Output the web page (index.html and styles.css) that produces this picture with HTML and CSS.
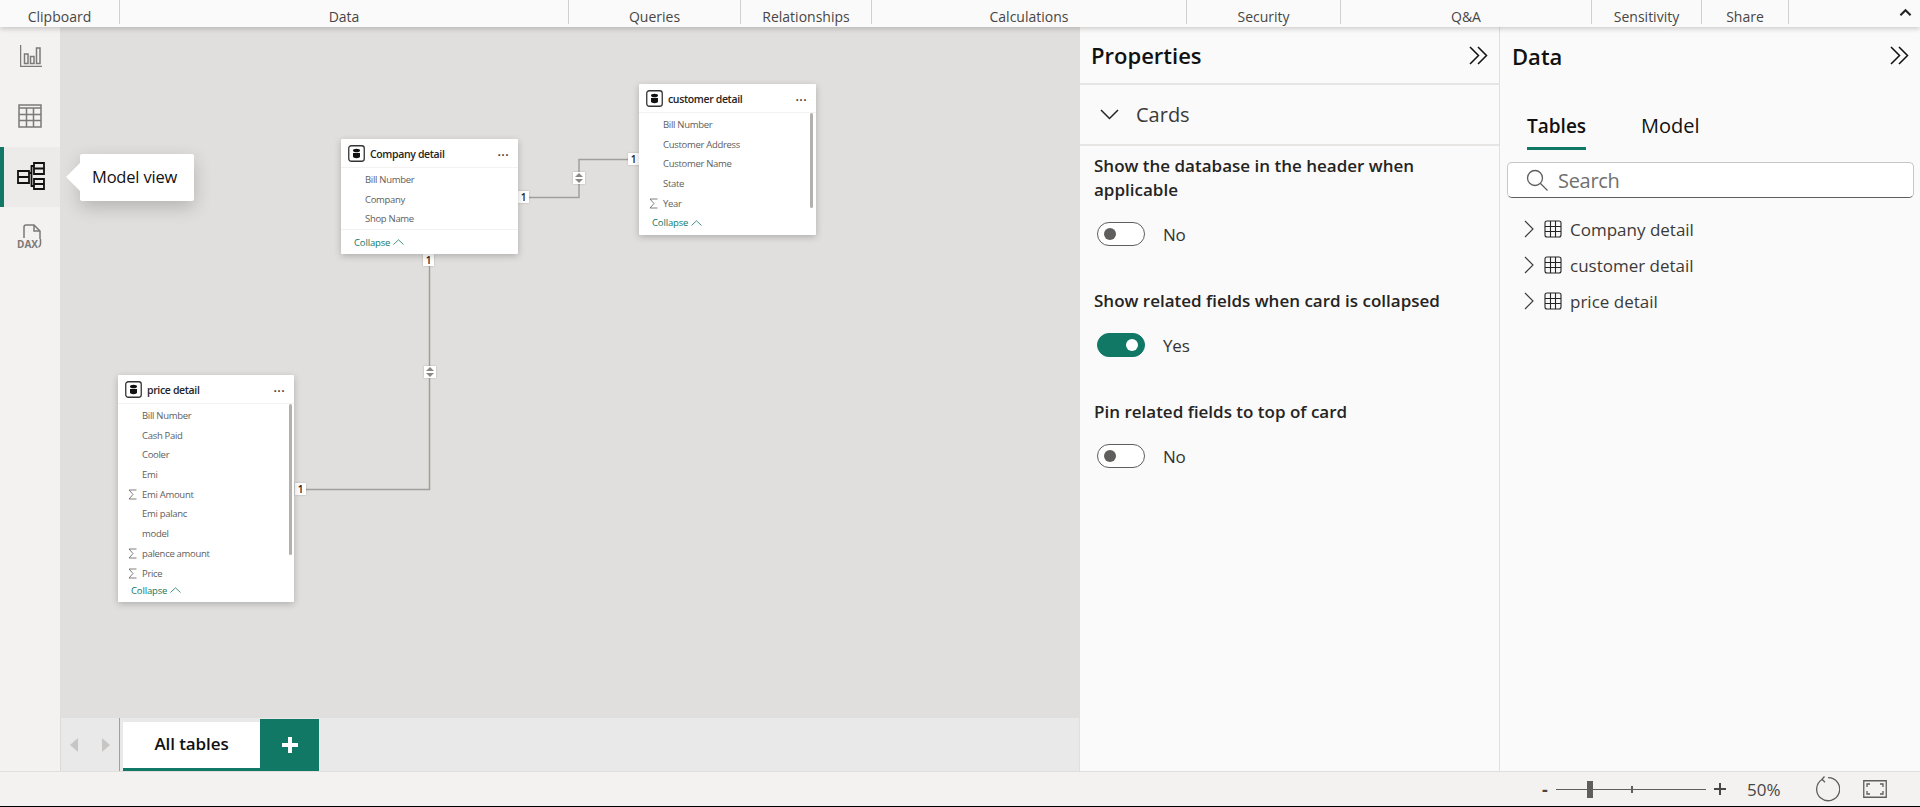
FILE: index.html
```html
<!doctype html>
<html lang="en">
<head>
  <meta charset="utf-8">
  <title>Model view</title>
  <link rel="stylesheet" href="styles.css">
</head>
<body>

  <!-- ribbon group labels -->
  <div class="ribbon">
    <div class="group">Clipboard</div>
    <div class="group">Data</div>
    <div class="group">Queries</div>
    <div class="group">Relationships</div>
    <div class="group">Calculations</div>
    <div class="group">Security</div>
    <div class="group">Q&amp;A</div>
    <div class="group">Sensitivity</div>
    <div class="group">Share</div>
    <svg class="ribbon-caret" viewBox="0 0 14 9"><path d="M1.5 7.5 7 2l5.5 5.5"/></svg>
  </div>

  <div class="main">
    <!-- left rail -->
    <nav class="rail">
      <div class="rail-item">
        <svg class="rail-icon nudge" width="22" height="22" viewBox="0 0 22 22"><path d="M.5 0v21.500H22M4.500 9h3.500v9.500H4.500zM10.500 11.500h3.500v7h-3.500zM16.500 3h3.500v15.500h-3.500z"/></svg>
      </div>
      <div class="rail-item">
        <svg class="rail-icon up" width="24" height="24" viewBox="0 0 24 24"><path d="M1 1h22v22H1zM1 4h22M1 10.500h22M1 16.500h22M8.500 4v19M15.500 4v19"/></svg>
      </div>
      <div class="rail-item active">
        <svg class="rail-icon dark" width="28" height="28" viewBox="0 0 28 28"><path d="M1 9h11v12H1zM1 15h11M17 1h10v11H17zM17 6.500h10M17 17h10v10H17zM17 22h10M12 11h2.500V4H17M14.500 11v13H17"/></svg>
        <div class="tooltip">Model view</div>
      </div>
      <div class="rail-item">
        <svg class="rail-icon" width="27" height="25" viewBox="0 0 27 25"><path d="M7 14V3q0-2 2-2h8l6 6v8M17 1v6h6M23.500 15v5q0 2-2 3"/><text class="dax" x="0" y="23.500">DAX</text></svg>
      </div>
    </nav>

    <div class="center">
      <div class="canvas">
        <!-- relationship lines -->
        <svg class="links" width="1019" height="691">
          <path d="M469 170.500H519V132.500H569"/>
          <path d="M369.500 238V462.500H246"/>
        </svg>

        <div class="tag tag-a">1</div>
        <div class="tag tag-b">1</div>
        <div class="tag tag-c">1</div>
        <div class="tag tag-d">1</div>
        <div class="dir dir-a"><svg width="8" height="10" viewBox="0 0 8 10"><path d="M4 0 8 4H0zM4 10 0 6h8z"/></svg></div>
        <div class="dir dir-b"><svg width="8" height="10" viewBox="0 0 8 10"><path d="M4 0 8 4H0zM4 10 0 6h8z"/></svg></div>

        <section class="card card-company">
          <header class="card-head">
            <svg class="db" width="17" height="17" viewBox="0 0 17 17"><rect x=".75" y=".75" width="15.500" height="15.500" rx="2.500"/><ellipse cx="8.500" cy="5.500" rx="3.500" ry="1.800"/><path d="M5 8h7v3.500c0 2.300-7 2.300-7 0z"/></svg>
            <span class="card-title">Company detail</span>
            <span class="dots">&middot;&middot;&middot;</span>
          </header>
          <div class="fields">
            <div class="field">Bill Number</div>
            <div class="field">Company</div>
            <div class="field">Shop Name</div>
          </div>
          <footer class="card-foot">Collapse <svg width="11" height="6" viewBox="0 0 11 6"><path d="M.5 5.500 5.500.800l5 4.700"/></svg></footer>
        </section>

        <section class="card card-customer">
          <header class="card-head">
            <svg class="db" width="17" height="17" viewBox="0 0 17 17"><rect x=".75" y=".75" width="15.500" height="15.500" rx="2.500"/><ellipse cx="8.500" cy="5.500" rx="3.500" ry="1.800"/><path d="M5 8h7v3.500c0 2.300-7 2.300-7 0z"/></svg>
            <span class="card-title">customer detail</span>
            <span class="dots">&middot;&middot;&middot;</span>
          </header>
          <div class="fields">
            <div class="field">Bill Number</div>
            <div class="field">Customer Address</div>
            <div class="field">Customer Name</div>
            <div class="field">State</div>
            <div class="field"><svg class="sum" width="9" height="11" viewBox="0 0 9 11"><path d="M8.500 1H1l4 4.500L1 10h7.500"/></svg>Year</div>
            <div class="scroll"></div>
          </div>
          <footer class="card-foot flat">Collapse <svg width="11" height="6" viewBox="0 0 11 6"><path d="M.5 5.500 5.500.800l5 4.700"/></svg></footer>
        </section>

        <section class="card card-price">
          <header class="card-head">
            <svg class="db" width="17" height="17" viewBox="0 0 17 17"><rect x=".75" y=".75" width="15.500" height="15.500" rx="2.500"/><ellipse cx="8.500" cy="5.500" rx="3.500" ry="1.800"/><path d="M5 8h7v3.500c0 2.300-7 2.300-7 0z"/></svg>
            <span class="card-title">price detail</span>
            <span class="dots">&middot;&middot;&middot;</span>
          </header>
          <div class="fields">
            <div class="field">Bill Number</div>
            <div class="field">Cash Paid</div>
            <div class="field">Cooler</div>
            <div class="field">Emi</div>
            <div class="field"><svg class="sum" width="9" height="11" viewBox="0 0 9 11"><path d="M8.500 1H1l4 4.500L1 10h7.500"/></svg>Emi Amount</div>
            <div class="field">Emi palanc</div>
            <div class="field">model</div>
            <div class="field"><svg class="sum" width="9" height="11" viewBox="0 0 9 11"><path d="M8.500 1H1l4 4.500L1 10h7.500"/></svg>palence amount</div>
            <div class="field"><svg class="sum" width="9" height="11" viewBox="0 0 9 11"><path d="M8.500 1H1l4 4.500L1 10h7.500"/></svg>Price</div>
            <div class="scroll"></div>
          </div>
          <footer class="card-foot flat">Collapse <svg width="11" height="6" viewBox="0 0 11 6"><path d="M.5 5.500 5.500.800l5 4.700"/></svg></footer>
        </section>
      </div>

      <!-- layout tabs -->
      <div class="tabbar">
        <div class="tab-nav">
          <svg width="8" height="14" viewBox="0 0 8 14"><path d="M8 0v14L0 7z"/></svg>
          <svg width="8" height="14" viewBox="0 0 8 14"><path d="M0 0v14l8-7z"/></svg>
        </div>
        <div class="tab">All tables</div>
        <div class="tab-add"><svg width="18" height="18" viewBox="0 0 18 18"><path d="M9 1v16M1 9h16"/></svg></div>
      </div>
    </div>

    <aside class="panel">
      <div class="panel-head">
        <h2 class="panel-title">Properties</h2>
        <svg class="collapse" width="19" height="19" viewBox="0 0 19 19"><path d="M1 1l8.500 8.500L1 18M9 1l8.500 8.500L9 18"/></svg>
      </div>
      <div class="cards-row">
        <svg width="19" height="11" viewBox="0 0 19 11"><path d="M1 1l8.500 8.500L18 1"/></svg>
        <span>Cards</span>
      </div>
      <div class="settings">
        <div class="setting">
          <div class="setting-title">Show the database in the header when applicable</div>
          <div class="switch-row"><span class="switch"></span>No</div>
        </div>
        <div class="setting">
          <div class="setting-title">Show related fields when card is collapsed</div>
          <div class="switch-row"><span class="switch on"></span>Yes</div>
        </div>
        <div class="setting">
          <div class="setting-title">Pin related fields to top of card</div>
          <div class="switch-row"><span class="switch"></span>No</div>
        </div>
      </div>
    </aside>

    <aside class="panel data-panel">
      <div class="panel-head plain">
        <h2 class="panel-title">Data</h2>
        <svg class="collapse" width="19" height="19" viewBox="0 0 19 19"><path d="M1 1l8.500 8.500L1 18M9 1l8.500 8.500L9 18"/></svg>
      </div>
      <div class="data-tabs">
        <div class="data-tab active">Tables</div>
        <div class="data-tab">Model</div>
      </div>
      <div class="search">
        <svg width="22" height="22" viewBox="0 0 22 22"><circle cx="9" cy="9" r="7.500"/><path d="m14.500 14.500 7 7"/></svg>
        <span>Search</span>
      </div>
      <div class="tree">
        <div class="tree-row">
          <svg class="tree-arrow" width="10" height="18" viewBox="0 0 10 18"><path d="m1 1 8 8-8 8"/></svg>
          <svg class="tree-table" width="18" height="18" viewBox="0 0 18 18"><path d="M3 1h12q2 0 2 2v12q0 2-2 2H3q-2 0-2-2V3q0-2 2-2zM1 6.500h16M1 11.500h16M6.500 1v16M11.500 1v16"/></svg>
          Company detail
        </div>
        <div class="tree-row">
          <svg class="tree-arrow" width="10" height="18" viewBox="0 0 10 18"><path d="m1 1 8 8-8 8"/></svg>
          <svg class="tree-table" width="18" height="18" viewBox="0 0 18 18"><path d="M3 1h12q2 0 2 2v12q0 2-2 2H3q-2 0-2-2V3q0-2 2-2zM1 6.500h16M1 11.500h16M6.500 1v16M11.500 1v16"/></svg>
          customer detail
        </div>
        <div class="tree-row">
          <svg class="tree-arrow" width="10" height="18" viewBox="0 0 10 18"><path d="m1 1 8 8-8 8"/></svg>
          <svg class="tree-table" width="18" height="18" viewBox="0 0 18 18"><path d="M3 1h12q2 0 2 2v12q0 2-2 2H3q-2 0-2-2V3q0-2 2-2zM1 6.500h16M1 11.500h16M6.500 1v16M11.500 1v16"/></svg>
          price detail
        </div>
      </div>
    </aside>
  </div>

  <!-- status bar with zoom controls -->
  <div class="status">
    <span class="zoom-sign">-</span>
    <div class="slider"><span class="thumb"></span><span class="tick"></span></div>
    <svg class="plus" width="12" height="12" viewBox="0 0 12 12"><path d="M6 0v12M0 6h12"/></svg>
    <span class="percent">50%</span>
    <svg class="reset" width="26" height="26" viewBox="0 0 26 26"><path d="M8.500 3.200A11.500 11.500 0 1 0 14 1.700M10.500 .5 8 3.300l3 3"/></svg>
    <svg class="fit" width="24" height="18" viewBox="0 0 24 18"><path d="M.75.75h22.500v16.500H.75zM4 7V4h3M17 4h3v3M4 11v3h3M17 14h3v-3"/></svg>
  </div>

</body>
</html>
```

FILE: styles.css
```css
html, body {
  height: 100%;
}

body {
  margin: 0;
  height: 807px;
  overflow: hidden;
  display: flex;
  flex-direction: column;
  font-family: 'Open Sans', 'Liberation Sans', sans-serif;
  background-color: #fafafa;
  color: #252423;
}

svg {
  display: block;
  fill: none;
  stroke: currentColor;
}

/* ribbon */
.ribbon {
  height: 27px;
  flex: none;
  display: grid;
  grid-template-columns: 120px 449px 172px 131px 315px 154px 251px 110px 87px;
  position: relative;
  z-index: 2;
  background-color: #fafafa;
  box-shadow: 0 2px 5px rgba(0, 0, 0, .18);
  color: #484644;
  font-size: 14px;
}

.group {
  height: 24px;
  padding-top: 7px;
  box-sizing: border-box;
  line-height: 20px;
  text-align: center;
  border-right: 1px solid #d2d0ce;
}

.ribbon-caret {
  position: absolute;
  right: 8px;
  top: 8px;
  width: 13px;
  height: 9px;
  stroke: #252423;
  stroke-width: 2.2;
}

.main {
  flex: 1;
  display: flex;
  min-height: 0;
}

/* left rail */
.rail {
  width: 60px;
  flex: none;
  background-color: #f3f2f1;
}

.rail-item {
  height: 60px;
  display: flex;
  align-items: center;
  justify-content: center;
  position: relative;
}

.rail-item.active {
  background-color: #edebe9;
  box-shadow: inset 4px 0 0 #117865;
}

.rail-icon {
  stroke: #7c7a78;
  stroke-width: 1.5;
  margin-top: -2px;
}

.rail-icon.nudge {
  margin-left: 1px;
}

.rail-icon.up {
  margin-top: -3px;
}

.rail-icon.dark {
  stroke: #111;
  stroke-width: 1.800;
  margin-left: 2px;
}

.dax {
  fill: #7c7a78;
  stroke: none;
  font-size: 10px;
  font-weight: 700;
  font-family: 'Open Sans', sans-serif;
}

.tooltip {
  position: absolute;
  left: 80px;
  top: 7px;
  width: 114px;
  height: 47px;
  z-index: 3;
  box-sizing: border-box;
  padding-left: 12px;
  background-color: #fff;
  border-radius: 2px;
  box-shadow: 0 6px 18px rgba(0, 0, 0, .2);
  color: #111;
  font-size: 16.500px;
  letter-spacing: -.2px;
  line-height: 46px;
  white-space: nowrap;
}

.tooltip::before {
  content: "";
  position: absolute;
  left: -14px;
  top: 9px;
  border: 14px solid transparent;
  border-left: 0;
  border-right-color: #fff;
}

/* canvas */
.center {
  flex: 1;
  display: flex;
  flex-direction: column;
  min-width: 0;
}

.canvas {
  flex: 1;
  position: relative;
  background-color: #e0dfdd;
}

.links {
  position: absolute;
  left: 0;
  top: 0;
  stroke: #a19f9d;
  stroke-width: 1.500;
}

.tag {
  position: absolute;
  width: 11px;
  height: 12px;
  background-color: #fff;
  color: #252423;
  font-size: 10px;
  font-weight: 600;
  line-height: 12px;
  text-align: center;
  box-shadow: 0 0 2px rgba(0, 0, 0, .2);
}

.tag-a { left: 458px; top: 164px; }
.tag-b { left: 568px; top: 126px; }
.tag-c { left: 363px; top: 227px; }
.tag-d { left: 235px; top: 456px; }

.dir {
  position: absolute;
  width: 12px;
  height: 12px;
  display: flex;
  align-items: center;
  justify-content: center;
  background-color: #fff;
  box-shadow: 0 0 2px rgba(0, 0, 0, .2);
}

.dir svg {
  fill: #8a8886;
  stroke: none;
}

.dir-a { left: 513px; top: 145px; }
.dir-b { left: 364px; top: 339px; }

.card {
  position: absolute;
  display: flex;
  flex-direction: column;
  background-color: #fff;
  box-shadow: 0 2px 7px rgba(0, 0, 0, .22);
  border-radius: 1px;
}

.card-company { left: 281px; top: 112px; width: 177px; height: 115px; }
.card-customer { left: 579px; top: 57px; width: 177px; height: 151px; }
.card-price { left: 58px; top: 348px; width: 176px; height: 227px; }

.card-head {
  height: 29px;
  flex: none;
  display: flex;
  align-items: center;
  padding: 1px 9px 0 7px;
  border-bottom: 1px solid #f3f2f1;
  box-sizing: border-box;
}

.db {
  flex: none;
  margin-right: 5px;
  margin-top: -1px;
}

.db rect {
  stroke: #333;
  stroke-width: 1.300;
}

.db ellipse, .db > path {
  fill: #111;
  stroke: none;
}

.card-title {
  flex: 1;
  font-size: 10.500px;
  font-weight: 600;
  letter-spacing: -.35px;
  color: #252423;
}

.dots {
  font-size: 15px;
  font-weight: 400;
  line-height: 12px;
  color: #333;
}

.fields {
  flex: 1;
  position: relative;
  padding-top: 2px;
  overflow: hidden;
}

.field {
  height: 19.700px;
  padding-left: 24px;
  position: relative;
  font-size: 9.500px;
  letter-spacing: -.3px;
  line-height: 19.700px;
  color: #605e5c;
}

.sum {
  position: absolute;
  left: 10px;
  top: 4px;
  stroke: #605e5c;
  stroke-width: .8;
}

.scroll {
  position: absolute;
  right: 3px;
  top: 0;
  width: 3.500px;
  height: 95px;
  background-color: #b3b0ad;
  border-radius: 2px;
}

.card-price .scroll {
  right: 2px;
  height: 151px;
}

.card-foot {
  height: 25px;
  flex: none;
  display: flex;
  align-items: center;
  gap: 3px;
  padding-left: 13px;
  border-top: 1px solid #f3f2f1;
  box-sizing: border-box;
  color: #117865;
  font-size: 9.500px;
  letter-spacing: -.15px;
}

.card-foot.flat {
  border-top: 0;
}

/* the price card has more rows than room, the footer gives way */
.card-price .card-foot {
  height: 18px;
  padding-bottom: 6px;
}

.card-foot svg {
  stroke: #117865;
  stroke-width: .8;
}

/* layout tabs */
.tabbar {
  height: 53px;
  flex: none;
  display: flex;
  align-items: flex-end;
  background-color: #e9e9e9;
  border-left: 1px solid #dcdbda;
  box-sizing: border-box;
}

.tab-nav {
  width: 59px;
  height: 53px;
  flex: none;
  display: flex;
  align-items: center;
  justify-content: center;
  gap: 24px;
  box-sizing: border-box;
  border-right: 1px solid #a19f9d;
  margin-top: 1px;
}

.tab-nav svg {
  fill: #c8c6c4;
  stroke: none;
}

.tab {
  width: 137px;
  height: 49px;
  margin-left: 3px;
  background-color: #fff;
  border-bottom: 3px solid #117865;
  box-sizing: border-box;
  color: #111;
  font-size: 17px;
  font-weight: 600;
  letter-spacing: -.1px;
  line-height: 44px;
  text-align: center;
}

.tab-add {
  width: 59px;
  height: 52px;
  display: flex;
  align-items: center;
  justify-content: center;
  background-color: #117865;
  color: #fff;
}

.tab-add svg {
  stroke-width: 4;
}

/* right panels */
.panel {
  width: 420px;
  flex: none;
  box-sizing: border-box;
  background-color: #fafafa;
  border-left: 1px solid #e1dfdd;
}

.data-panel {
  width: 421px;
}

.panel-head {
  height: 58px;
  display: flex;
  align-items: center;
  justify-content: space-between;
  box-sizing: border-box;
  padding: 0 11px 0 11px;
  border-bottom: 2px solid #e6e5e4;
}

.panel-head.plain {
  height: 57px;
  padding-left: 12px;
  border-bottom: 0;
}

.panel-title {
  margin: 0;
  color: #111;
  font-size: 22px;
  font-weight: 600;
}

.collapse {
  stroke: #111;
  stroke-width: 1.500;
}

.cards-row {
  height: 61px;
  display: flex;
  align-items: center;
  gap: 17px;
  padding-left: 20px;
  box-sizing: border-box;
  border-bottom: 2px solid #e6e5e4;
  font-size: 20px;
  color: #3b3a39;
}

.cards-row svg {
  stroke: #252423;
  stroke-width: 1.500;
}

.settings {
  padding: 8px 0 0 14px;
}

.setting {
  margin-bottom: 43px;
}

.setting-title {
  max-width: 390px;
  color: #252423;
  font-size: 17px;
  font-weight: 600;
  line-height: 24px;
}

.switch-row {
  display: flex;
  align-items: center;
  gap: 18px;
  margin-top: 20px;
  margin-left: 3px;
  font-size: 17px;
  letter-spacing: -.2px;
  color: #333;
}

.switch {
  width: 48px;
  height: 24px;
  border: 1px solid #605e5c;
  border-radius: 12px;
  box-sizing: border-box;
  display: flex;
  align-items: center;
  padding-left: 6px;
  background-color: #fff;
}

.switch::after {
  content: "";
  width: 12px;
  height: 12px;
  border-radius: 50%;
  background-color: #605e5c;
}

.switch.on {
  border-color: #117865;
  background-color: #117865;
  justify-content: flex-end;
  padding: 0 6px 0 0;
}

.switch.on::after {
  background-color: #fff;
}

/* data pane */
.data-tabs {
  display: flex;
  gap: 55px;
  margin-top: 23px;
  padding-left: 27px;
  color: #111;
  font-size: 20px;
}

.data-tab {
  height: 43px;
  line-height: 38px;
  box-sizing: border-box;
}

.data-tab.active {
  font-size: 19px;
  font-weight: 600;
  border-bottom: 3px solid #117865;
}

.search {
  height: 36px;
  margin: 12px 6px 0 7px;
  display: flex;
  align-items: center;
  gap: 10px;
  padding-left: 18px;
  box-sizing: border-box;
  background-color: #fff;
  border: 1px solid #c8c6c4;
  border-bottom-color: #605e5c;
  border-radius: 5px;
  color: #707070;
  font-size: 20px;
  letter-spacing: -.3px;
}

.search svg {
  stroke: #605e5c;
  stroke-width: 1.300;
}

.tree {
  padding-top: 13px;
}

.tree-row {
  height: 36px;
  display: flex;
  align-items: center;
  padding-left: 24px;
  font-size: 17px;
  color: #3b3a39;
}

.tree-arrow {
  stroke: #3b3a39;
  stroke-width: 1.100;
  margin-right: 10px;
}

.tree-table {
  stroke: #252423;
  stroke-width: 1.100;
  margin-right: 8px;
}

/* status bar */
.status {
  height: 36px;
  flex: none;
  display: flex;
  align-items: center;
  box-sizing: border-box;
  padding: 0 33px 0 1542px;
  background-color: #f3f2f1;
  border-top: 1px solid #e1dfdd;
  border-bottom: 1px solid #000;
  color: #484644;
}

.zoom-sign {
  width: 14px;
  font-size: 18px;
  font-weight: 700;
}

.slider {
  width: 150px;
  height: 1px;
  position: relative;
  background-color: #605e5c;
}

.thumb {
  position: absolute;
  left: 31px;
  top: -8px;
  width: 6px;
  height: 17px;
  background-color: #605e5c;
}

.tick {
  position: absolute;
  left: 75px;
  top: -3px;
  width: 1.500px;
  height: 7px;
  background-color: #605e5c;
}

.plus {
  margin-left: 8px;
  stroke: #484644;
  stroke-width: 2;
}

.percent {
  margin-left: 21px;
  width: 67px;
  font-size: 17px;
}

.reset {
  stroke: #605e5c;
  stroke-width: 1.300;
  margin-right: 23px;
}

.fit {
  stroke: #605e5c;
  stroke-width: 1.300;
}
```
